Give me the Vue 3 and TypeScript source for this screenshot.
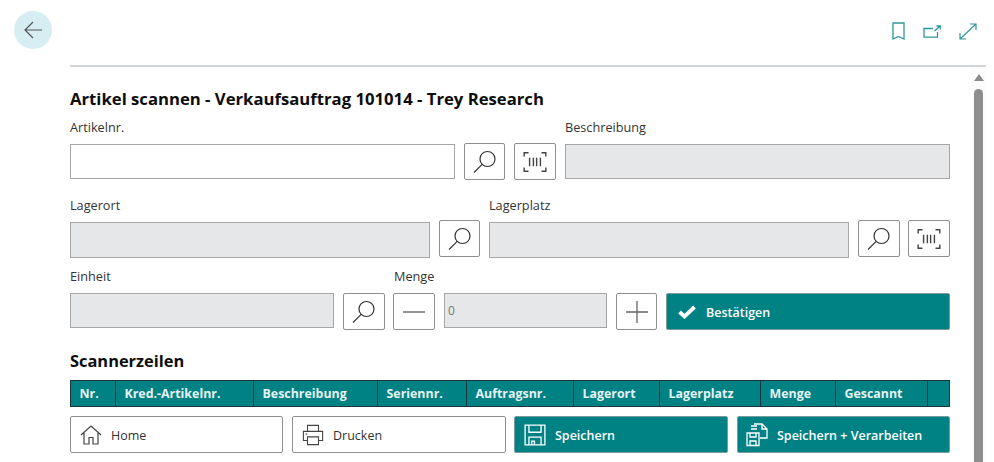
<script setup lang="ts">
const columns = [
  { label: 'Nr.', width: 45 },
  { label: 'Kred.-Artikelnr.', width: 138 },
  { label: 'Beschreibung', width: 124 },
  { label: 'Seriennr.', width: 89 },
  { label: 'Auftragsnr.', width: 107 },
  { label: 'Lagerort', width: 86 },
  { label: 'Lagerplatz', width: 101 },
  { label: 'Menge', width: 75 },
  { label: 'Gescannt', width: 92 },
  { label: '', width: 22 },
]
</script>

<template>
  <div class="page">
    <header class="topbar">
      <button class="back" aria-label="Zurück">
        <svg width="18" height="18" viewBox="0 0 18 18" fill="none" stroke="#555" stroke-width="1.2">
          <path d="M1 9H18M9 1L1 9L9 17" />
        </svg>
      </button>
      <div class="top-icons">
        <svg width="13" height="18" viewBox="0 0 13 18" fill="none" stroke="#2f979c" stroke-width="1.3">
          <path d="M1 1H12V17L6.5 14.5L1 17Z" />
        </svg>
        <svg width="18" height="13" viewBox="0 0 18 13" fill="none" stroke="#2f979c" stroke-width="1.3">
          <path d="M10 3.5H1V12.2H14.5V7M11.5 6L17 1M13.5 1H17.3V4.5" />
        </svg>
        <svg width="18" height="17" viewBox="0 0 18 17" fill="none" stroke="#2f979c" stroke-width="1.2">
          <path d="M1 16L17 1M11 1H17V7M1 10V16H7" />
        </svg>
      </div>
    </header>
    <div class="divider"></div>

    <div class="body">
      <main class="main">
        <h1 class="title">Artikel scannen - Verkaufsauftrag 101014 - Trey Research</h1>

        <div class="row row-1">
          <div class="field w385">
            <label>Artikelnr.</label>
            <div class="input"></div>
          </div>
          <button class="icon-btn w41" aria-label="Suchen">
            <svg class="i-search" viewBox="0 0 24 24" fill="none" stroke="#333" stroke-width="1.2"><circle cx="14.5" cy="9" r="7.5"/><path d="M9.2 14.3L1 22.5"/></svg>
          </button>
          <button class="icon-btn" aria-label="Scannen">
            <svg class="i-scan" viewBox="0 0 24 20" fill="none" stroke="#444" stroke-width="1.3"><path d="M6 1.5H2V5M18 1.5H22V5M2 15V18.5H6M22 15V18.5H18M7 6V14M10.5 6V14M13.5 6V14M17 6V14"/></svg>
          </button>
          <div class="field grow">
            <label>Beschreibung</label>
            <div class="input disabled"></div>
          </div>
        </div>

        <div class="row row-2">
          <div class="field w360">
            <label>Lagerort</label>
            <div class="input disabled tall"></div>
          </div>
          <button class="icon-btn w41 lift" aria-label="Suchen">
            <svg class="i-search" viewBox="0 0 24 24" fill="none" stroke="#333" stroke-width="1.2"><circle cx="14.5" cy="9" r="7.5"/><path d="M9.2 14.3L1 22.5"/></svg>
          </button>
          <div class="field w360">
            <label>Lagerplatz</label>
            <div class="input disabled tall"></div>
          </div>
          <button class="icon-btn lift" aria-label="Suchen">
            <svg class="i-search" viewBox="0 0 24 24" fill="none" stroke="#333" stroke-width="1.2"><circle cx="14.5" cy="9" r="7.5"/><path d="M9.2 14.3L1 22.5"/></svg>
          </button>
          <button class="icon-btn lift pull" aria-label="Scannen">
            <svg class="i-scan" viewBox="0 0 24 20" fill="none" stroke="#444" stroke-width="1.3"><path d="M6 1.5H2V5M18 1.5H22V5M2 15V18.5H6M22 15V18.5H18M7 6V14M10.5 6V14M13.5 6V14M17 6V14"/></svg>
          </button>
        </div>

        <div class="row row-3">
          <div class="field w264">
            <label>Einheit</label>
            <div class="input disabled mid"></div>
          </div>
          <button class="icon-btn" aria-label="Suchen">
            <svg class="i-search" viewBox="0 0 24 24" fill="none" stroke="#333" stroke-width="1.2"><circle cx="14.5" cy="9" r="7.5"/><path d="M9.2 14.3L1 22.5"/></svg>
          </button>
          <div class="field menge-label">
            <label>Menge</label>
            <button class="icon-btn" aria-label="Weniger">
              <svg width="22" height="2" viewBox="0 0 22 2"><path d="M0 1H22" stroke="#666" stroke-width="1.4"/></svg>
            </button>
          </div>
          <div class="input disabled mid qty">0</div>
          <button class="icon-btn w41" aria-label="Mehr">
            <svg width="22" height="22" viewBox="0 0 22 22"><path d="M0 11H22M11 0V22" stroke="#666" stroke-width="1.3"/></svg>
          </button>
          <button class="primary confirm">
            <svg width="18" height="14" viewBox="0 0 18 14" fill="none" stroke="#fff" stroke-width="3.8"><path d="M1.5 7L6.5 11.5L16.5 2"/></svg>
            <span class="txt">Bestätigen</span>
          </button>
        </div>

        <h2 class="title sub">Scannerzeilen</h2>
        <table class="grid">
          <colgroup><col v-for="c in columns" :key="c.label" :style="{ width: c.width + 'px' }" /></colgroup>
          <thead><tr><th v-for="c in columns" :key="c.label">{{ c.label }}</th></tr></thead>
        </table>

        <div class="actions">
          <button class="action a-home">
            <svg width="22" height="22" viewBox="0 0 22 22" fill="none" stroke="#444" stroke-width="1.2"><path d="M1 11L11 2L21 11M4 9V20H9V13.5H13V20H18V9"/></svg>
            <span class="txt">Home</span>
          </button>
          <button class="action a-print">
            <svg width="22" height="22" viewBox="0 0 24 24" fill="none" stroke="#444" stroke-width="1.2"><path d="M6 8V1.5H18V8M6 18H1.5V8H22.5V18H18M6 14H18V22.5H6Z"/><path d="M4 11H6"/></svg>
            <span class="txt">Drucken</span>
          </button>
          <button class="action primary a-save">
            <svg width="22" height="22" viewBox="0 0 20 20" fill="none" stroke="#fff" stroke-width="1.2"><path d="M1 1H19V19H1ZM4.5 1V7.5H15.5V1M4.5 19V12H15.5V19M7 15.5H9.5V19H7Z"/></svg>
            <span class="txt">Speichern</span>
          </button>
          <button class="action primary a-process">
            <svg width="24" height="24" viewBox="1 0 24 24" fill="none" stroke="#fff" stroke-width="1.3"><path d="M9 1H17L22 6V15H15M17 1V6H22M6 3H12M6 6H12M2 10H14V22.5H2ZM5 10V14H11V10M5 22.5V18H11V22.5"/></svg>
            <span class="txt">Speichern + Verarbeiten</span>
          </button>
        </div>
      </main>
      <aside class="scroll">
        <span class="arrow"></span>
        <span class="thumb"></span>
      </aside>
    </div>
  </div>
</template>

<style>
html, body { margin: 0; background: #fff; overflow: hidden; }
</style>

<style scoped>
.page {
  width: 994px;
  height: 462px;
  overflow: hidden;
  font-family: "Open Sans", "Noto Sans", "Liberation Sans", sans-serif;
  color: #222;
  box-sizing: border-box;
}
button { font-family: inherit; padding: 0; cursor: pointer; flex-shrink: 0; }
.txt { margin-top: 2px; }
.topbar {
  height: 65px;
  display: flex;
  justify-content: space-between;
  padding: 11px 17px 0 14px;
  box-sizing: border-box;
}
.back {
  width: 38px; height: 38px;
  border-radius: 50%;
  border: 0;
  background: #d6eef1;
  display: flex; align-items: center; justify-content: center;
}
.top-icons { display: flex; align-items: center; gap: 18px; height: 18px; margin-top: 11px; }
.divider { height: 2px; margin: 0 8px 0 70px; background: #d0d3d8; }
.body { display: flex; margin-left: 70px; }
.main { width: 880px; flex-shrink: 0; }
.title {
  font-size: 16.7px; font-weight: 700; color: #0d0d0d;
  margin: 20px 0 0; line-height: 24px;
}
.row { display: flex; align-items: flex-end; gap: 9px; height: 54px; }
.row-1 { margin-top: 15px; }
.row-2 { margin-top: 24px; }
.row-3 { margin-top: 18px; }
.field { display: flex; flex-direction: column; flex-shrink: 0; }
.field label { font-size: 12.7px; line-height: 18px; margin-bottom: 8px; color: #333; }
.w385 { width: 385px; }
.w360 { width: 360px; }
.w264 { width: 264px; }
.grow { flex: 1; flex-shrink: 1; }
.input {
  height: 33px;
  border: 1px solid #a6a6a6;
  background: #fff;
  margin-bottom: 1px;
}
.disabled { background: #e6e7e8; }
.tall { height: 34px; margin-bottom: 0; }
.mid { height: 33px; margin-bottom: 2px; }
.qty {
  width: 158px;
  font-size: 12px; line-height: 33px; padding-left: 3px; color: #777;
}
.icon-btn {
  width: 42px; height: 37px;
  border: 1px solid #8f8f8f;
  border-radius: 2px;
  background: #fff;
  display: flex; align-items: center; justify-content: center;
  box-sizing: border-box;
}
.w41 { width: 41px; }
.lift { margin-bottom: 1px; }
.pull { margin-left: -1px; }
.i-search { width: 24px; height: 24px; }
.i-scan { width: 26px; height: 22px; }
.menge-label { margin-left: -1px; }
.menge-label label { margin-bottom: 8px; padding-left: 1px; }
.primary {
  background: #008285;
  color: #fff;
  border: 1px solid #7b9a9c;
  border-radius: 2px;
  font-weight: 600;
}
.confirm {
  flex: 1;
  height: 37px;
  display: flex; align-items: center; gap: 10px;
  padding-left: 11px;
  font-size: 12.5px;
}
.sub { margin: 19px 0 0; font-size: 16.4px; }
.grid {
  width: 879px;
  margin-top: 7px;
  table-layout: fixed;
  border-collapse: collapse;
  background: #008285;
  color: #e6f3f3;
}
.grid th {
  height: 25px;
  padding: 0 0 0 8.5px;
  border: 1px solid #17353a;
  font-size: 12.4px;
  font-weight: 700;
  text-align: left;
  white-space: nowrap;
  overflow: hidden;
}
.actions { display: flex; gap: 9px; margin-top: 9px; }
.action {
  height: 37px;
  display: flex; align-items: center; gap: 9px;
  padding-left: 9px;
  border: 1px solid #8f8f8f;
  border-radius: 2px;
  background: #fff;
  color: #333;
  font-size: 12.5px;
  box-sizing: border-box;
}
.action.primary { background: #008285; color: #fff; border-color: #7b9a9c; font-weight: 600; }
.a-home { width: 213px; }
.a-print { width: 214px; }
.a-save { width: 214px; margin-left: -1px; }
.a-process { width: 213px; padding-left: 8px; gap: 7px; }
.scroll {
  width: 15px;
  margin-left: 21px;
  height: 395px;
  background: #fcfcfc;
  display: flex; flex-direction: column; align-items: center;
  padding-top: 7px;
  gap: 8px;
  box-sizing: border-box;
}
.arrow {
  width: 0; height: 0;
  flex-shrink: 0;
  border-left: 5px solid transparent;
  border-right: 5px solid transparent;
  border-bottom: 7px solid #8a8a8a;
}
.thumb { width: 9px; height: 400px; flex-shrink: 0; background: #8e8e8e; border-radius: 5px 5px 0 0; }
</style>
